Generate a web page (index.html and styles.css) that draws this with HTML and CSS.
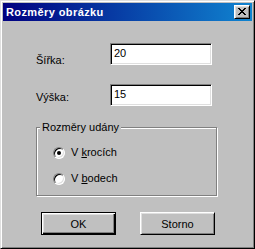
FILE: index.html
```html
<!DOCTYPE html>
<html lang="cs">
<head>
<meta charset="utf-8">
<title>Rozměry obrázku</title>
<link rel="stylesheet" href="styles.css">
</head>
<body>
<div class="window">
  <div class="titlebar">
    <span class="title">Rozměry obrázku</span>
    <span class="close">
      <svg width="8" height="7" viewBox="0 0 8 7" shape-rendering="crispEdges">
        <path d="M0 0h2v1h-2z M6 0h2v1h-2z M1 1h2v1h-2z M5 1h2v1h-2z M2 2h4v1h-4z M3 3h2v1h-2z M2 4h4v1h-4z M1 5h2v1h-2z M5 5h2v1h-2z M0 6h2v1h-2z M6 6h2v1h-2z" fill="#000"/>
      </svg>
    </span>
  </div>
  <div class="content">
    <div class="fields">
      <span class="label first">Šířka:</span>
      <span class="input">20</span>
      <span class="label second">Výška:</span>
      <span class="input">15</span>
    </div>
    <div class="group">
      <span class="legend">Rozměry udány</span>
      <div class="options">
        <div class="option"><span class="radio checked"></span><span>V <u>k</u>rocích</span></div>
        <div class="option"><span class="radio"></span><span>V <u>b</u>odech</span></div>
      </div>
    </div>
    <div class="buttons">
      <span class="button default">OK</span>
      <span class="button">Storno</span>
    </div>
  </div>
</div>
</body>
</html>
```

FILE: styles.css
```css
html, body {
  margin: 0;
  padding: 0;
  background: #c0c0c0;
}
body {
  font-family: "Liberation Sans", Arial, sans-serif;
  font-size: 11px;
  color: #000;
}
.window {
  box-sizing: border-box;
  width: 255px;
  height: 249px;
  background: #c0c0c0;
  border: 1px solid;
  border-color: #dfdfdf #000 #000 #dfdfdf;
  box-shadow: inset 1px 1px 0 #fff, inset -1px -1px 0 #808080;
  padding: 2px;
}
.titlebar {
  height: 18px;
  display: flex;
  align-items: center;
  justify-content: space-between;
  padding: 0 2px 0 3px;
  background: linear-gradient(to right, #000080, #1084d0);
}
.title {
  color: #fff;
  font-weight: bold;
  letter-spacing: 0.4px;
  line-height: 18px;
}
.close {
  box-sizing: border-box;
  width: 16px;
  height: 14px;
  background: #c0c0c0;
  border: 1px solid;
  border-color: #fff #000 #000 #fff;
  box-shadow: inset 1px 1px 0 #dfdfdf, inset -1px -1px 0 #808080;
  padding: 2px 0 0 3px;
  display: flex;
  align-items: flex-start;
}
.close svg {
  display: block;
}
.content {
  padding: 22px 0 0 33px;
}
.fields {
  display: grid;
  grid-template-columns: 74px 102px;
  grid-auto-rows: 22px;
  row-gap: 19px;
}
.label {
  line-height: 13px;
}
.label.first {
  padding-top: 11px;
}
.label.second {
  padding-top: 7px;
}
.input {
  box-sizing: border-box;
  background: #fff;
  border: 1px solid;
  border-color: #808080 #fff #fff #808080;
  box-shadow: inset 1px 1px 0 #000, inset -1px -1px 0 #dfdfdf;
  padding-left: 3px;
  line-height: 19px;
}
.group {
  box-sizing: border-box;
  margin-top: 21px;
  width: 181px;
  height: 69px;
  border: 1px solid #808080;
  box-shadow: 1px 1px 0 #fff, inset 1px 1px 0 #fff;
}
.legend {
  display: block;
  width: fit-content;
  margin: -7px 0 0 3px;
  padding: 0 2px;
  background: #c0c0c0;
  line-height: 13px;
}
.options {
  display: flex;
  flex-direction: column;
  gap: 13px;
  margin-top: 12px;
  padding-left: 16px;
}
.option {
  display: flex;
  align-items: center;
  gap: 6px;
  height: 13px;
  line-height: 13px;
}
.radio {
  position: relative;
  box-sizing: border-box;
  width: 12px;
  height: 12px;
  border-radius: 50%;
  background: #fff;
  border: 1px solid;
  border-color: #808080 #fff #fff #808080;
  box-shadow: inset 1px 1px 0 #000, inset -1px -1px 0 #dfdfdf;
}
.radio.checked::after {
  content: "";
  position: absolute;
  left: 3px;
  top: 3px;
  width: 4px;
  height: 4px;
  border-radius: 50%;
  background: #000;
}
.buttons {
  display: flex;
  gap: 24px;
  margin-top: 16px;
  padding-left: 5px;
}
.button {
  box-sizing: border-box;
  width: 75px;
  height: 23px;
  display: flex;
  align-items: center;
  justify-content: center;
  border: 1px solid;
  border-color: #fff #000 #000 #fff;
  box-shadow: inset 1px 1px 0 #dfdfdf, inset -1px -1px 0 #808080;
}
.button.default {
  border-color: #000;
  box-shadow: inset 1px 1px 0 #fff, inset -1px -1px 0 #000, inset -2px -2px 0 #808080, inset 2px 2px 0 #dfdfdf;
}
```
